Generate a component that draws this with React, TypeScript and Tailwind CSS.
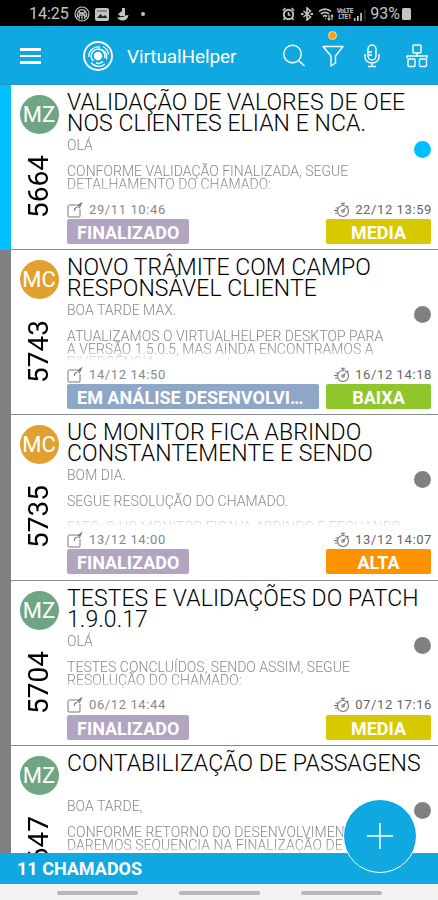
import clsx from "clsx";

type Ticket = {
  id: string;
  initials: string;
  avatar: string;
  title: string[];
  body: string[];
  opened: string;
  due: string;
  status: string;
  statusStyle: string;
  priority: string;
  priorityStyle: string;
  active?: boolean;
};

const tickets: Ticket[] = [
  {
    id: "5664",
    initials: "MZ",
    avatar: "bg-[#6fa582]",
    title: ["VALIDAÇÃO DE VALORES DE OEE", "NOS CLIENTES ELIAN E NCA."],
    body: ["OLÁ", "", "CONFORME VALIDAÇÃO FINALIZADA, SEGUE", "DETALHAMENTO DO CHAMADO:"],
    opened: "29/11 10:46",
    due: "22/12 13:59",
    status: "FINALIZADO",
    statusStyle: "w-[122px] bg-[#b3a4c1]",
    priority: "MEDIA",
    priorityStyle: "bg-[#d8c800]",
    active: true,
  },
  {
    id: "5743",
    initials: "MC",
    avatar: "bg-[#e0a131]",
    title: ["NOVO TRÂMITE COM CAMPO", "RESPONSÁVEL CLIENTE"],
    body: ["BOA TARDE MAX.", "", "ATUALIZAMOS O VIRTUALHELPER DESKTOP PARA", "A VERSÃO 1.5.0.5, MAS AINDA ENCONTRAMOS A", "DIVERGÊNCIA"],
    opened: "14/12 14:50",
    due: "16/12 14:18",
    status: "EM ANÁLISE DESENVOLVIMENTO",
    statusStyle: "w-[252px] bg-[#8ea7c6]",
    priority: "BAIXA",
    priorityStyle: "bg-[#8fc62b]",
  },
  {
    id: "5735",
    initials: "MC",
    avatar: "bg-[#e0a131]",
    title: ["UC MONITOR FICA ABRINDO", "CONSTANTEMENTE E SENDO"],
    body: ["BOM DIA.", "", "SEGUE RESOLUÇÃO DO CHAMADO.", "", "FATO: O UC MONITOR FICAVA ABRINDO E FECHANDO"],
    opened: "13/12 14:00",
    due: "13/12 14:07",
    status: "FINALIZADO",
    statusStyle: "w-[122px] bg-[#b3a4c1]",
    priority: "ALTA",
    priorityStyle: "bg-[#ff9200]",
  },
  {
    id: "5704",
    initials: "MZ",
    avatar: "bg-[#6fa582]",
    title: ["TESTES E VALIDAÇÕES DO PATCH", "1.9.0.17"],
    body: ["OLÁ", "", "TESTES CONCLUÍDOS, SENDO ASSIM, SEGUE", "RESOLUÇÃO DO CHAMADO:"],
    opened: "06/12 14:44",
    due: "07/12 17:16",
    status: "FINALIZADO",
    statusStyle: "w-[122px] bg-[#b3a4c1]",
    priority: "MEDIA",
    priorityStyle: "bg-[#d8c800]",
  },
  {
    id: "5647",
    initials: "MZ",
    avatar: "bg-[#6fa582]",
    title: ["CONTABILIZAÇÃO DE PASSAGENS"],
    body: ["BOA TARDE,", "", "CONFORME RETORNO DO DESENVOLVIMENTO", "DAREMOS SEQUENCIA NA FINALIZAÇÃO DE"],
    opened: "02/12 09:12",
    due: "06/12 10:30",
    status: "FINALIZADO",
    statusStyle: "w-[122px] bg-[#b3a4c1]",
    priority: "MEDIA",
    priorityStyle: "bg-[#d8c800]",
  },
];

function StatusBar() {
  return (
    <div className="flex h-[26px] shrink-0 items-center bg-black pt-[2px] pl-[29px] pr-[27px] text-[#c4c4c4]">
      <span className="w-[41px] text-[16px] leading-none whitespace-nowrap">14:25</span>
      <svg className="ml-[4px]" width="16" height="16" viewBox="0 0 16 16" fill="none" stroke="currentColor" strokeWidth="1.2">
        <circle cx="8" cy="8" r="7" />
        <path d="M3.5 11C2.5 7 5 3.7 8 3.7s5.5 3.3 4.5 7.3M5.5 13c-.8-3-.7-6.5 2.5-6.5s3.3 3.5 2.5 6.5M8 9v4.5M4 5l8 6M12 5l-8 6" />
      </svg>
      <svg className="ml-[5px]" width="14" height="13" viewBox="0 0 14 13">
        <rect width="14" height="13" rx="2" fill="currentColor" />
        <path d="M2 10l3.5-4 2.5 2.5L10 7l2.5 3z" fill="#222" />
        <path d="M2 3h10" stroke="#555" />
      </svg>
      <svg className="ml-[8px]" width="12" height="13" viewBox="0 0 12 13" fill="currentColor">
        <path d="M5 0h3v7.5l3.5-.5C11 10.5 9 12.5 6 12.5c-3.5 0-5.500-1.500-5.500-3L4 9 1 6l4-3z" />
        <path d="M3 8.5h4" stroke="#222" />
      </svg>
      <span className="ml-[12px] size-1 rounded-full bg-current" />

      <svg className="ml-auto" width="13" height="14" viewBox="0 0 13 14" fill="none" stroke="currentColor" strokeWidth="1.9">
        <circle cx="6.5" cy="7.5" r="4.7" />
        <path d="M.8 3.5L3.5 1M12.2 3.5L9.5 1M6.5 5v3h2M3 11l-1.5 2M10 11l1.5 2" strokeWidth="1.5" />
      </svg>
      <svg className="ml-[6px]" width="12" height="14" viewBox="0 0 12 14" fill="none" stroke="currentColor" strokeWidth="1.6">
        <path d="M2.5 4l7 6L6 13V1l3.5 3-7 6" />
        <path d="M0 7h2.5M9.5 7H12" strokeWidth="2" />
      </svg>
      <svg className="ml-[5px]" width="16" height="14" viewBox="0 0 16 14" fill="none" stroke="currentColor" strokeWidth="1.7">
        <path d="M1 4.5c3.5-3.3 8.5-3.3 12 0M3 7c2.5-2 5.5-2 8 0M5 9.5c1.3-1 2.7-1 4 0" />
        <path d="M7 11.5h1M11 8v5M9.800 11.500L11 13l1.200-1.500M14 13V8M12.900 9.500L14 8l1.200 1.500" strokeWidth="1.2" />
      </svg>
      <span className="ml-[2px] flex w-[17px] flex-col text-center text-[6.5px] leading-[6.5px] font-bold tracking-[-0.4px] whitespace-nowrap">
        <span>VoLTE</span>
        <span>LTE1</span>
      </span>
      <svg className="ml-[1px]" width="12" height="13" viewBox="0 0 12 13" fill="currentColor">
        <path d="M0 10h1.5v3H0zM3 8h1.7v5H3zM6.2 5h1.7v8H6.2z" />
        <path d="M10.5 1h1v12h-1z" fill="#444" />
      </svg>
      <span className="ml-[4px] text-[16px] leading-none">93%</span>
      <span className="ml-[2px] h-[12px] w-[9px] rounded-[1.5px] bg-current" />
    </div>
  );
}

function Header() {
  return (
    <header className="flex h-[59px] shrink-0 items-center border-b border-[#2b94bd] bg-[#10a8e0] pt-[2px] pr-[10px] pl-5 text-white">
      <div className="flex w-[21px] flex-col gap-[4px]">
        <span className="h-[2.5px] bg-white" />
        <span className="h-[2.5px] bg-white" />
        <span className="h-[2.5px] bg-white" />
      </div>
      <svg className="ml-[42px]" width="30" height="30" viewBox="0 0 30 30" fill="none" stroke="currentColor">
        <circle cx="15" cy="15" r="14" strokeWidth="1.9" />
        <circle cx="15" cy="15" r="4.2" fill="currentColor" stroke="none" />
        <path d="M10.5 20A6.8 6.8 0 1 1 21.5 17M13 22a7 7 0 0 0 7-1.5" strokeWidth="1.5" />
        <path d="M6 16A9.2 9.2 0 0 1 17 6M8 21.5a9.5 9.5 0 0 0 14 1.5M18.5 8.5a8 8 0 0 1 5 10M20 5.5c3 1.5 5 4.5 5.5 8" strokeWidth="1.3" />
      </svg>
      <span className="ml-[14px] text-[19px] leading-none tracking-[-0.1px] whitespace-nowrap">VirtualHelper</span>
      <div className="ml-auto flex items-center">
        <svg width="24" height="24" viewBox="0 0 24 24" fill="none" stroke="currentColor" strokeWidth="1.4">
          <circle cx="10.5" cy="10" r="8.7" />
          <path d="M16.5 16.5l6 5.5" />
        </svg>
        <div className="relative ml-[16px]">
          <svg width="22" height="22" viewBox="0 0 22 22" fill="none" stroke="currentColor" strokeWidth="1.4" strokeLinejoin="round">
            <path d="M1 1.5h20l-7.5 9.5v7l-4.5 3V11z" />
          </svg>
          <span className="absolute -top-[14px] left-[6px] size-[9px] rounded-full border border-[#f3dfae] bg-[#ff9e0b]" />
        </div>
        <svg className="ml-[20px]" width="16" height="24" viewBox="0 0 16 24" fill="none" stroke="currentColor" strokeWidth="1.4">
          <rect x="4" y="1" width="8" height="15" rx="4" />
          <path d="M1 10v3c0 3.5 3 6 7 6s7-2.5 7-6v-3M8 19v3.5M4 22.5h8M4.5 8H8M4.5 11H8" />
        </svg>
        <svg className="ml-[26px]" width="22" height="24" viewBox="0 0 22 24" fill="none" stroke="currentColor" strokeWidth="1.4">
          <rect x="7" y="1" width="8" height="8" rx="1" />
          <rect x="2" y="15" width="7" height="7.5" rx="1" />
          <rect x="13.5" y="15" width="7" height="7.5" rx="1" />
          <path d="M11 9v3M1 14.5V12h20v2.5" />
        </svg>
      </div>
    </header>
  );
}

function EditIcon() {
  return (
    <svg width="16" height="16" viewBox="0 0 16 16" fill="none" stroke="#777" strokeWidth="1">
      <path d="M9.5 3H2.5c-1 0-1.5.5-1.5 1.5V14c0 .7.3 1 1 1h10c.7 0 1-.3 1-1V7" />
      <path d="M7.5 9V7l5.5-4.5M14.5 1l-4 2.5 2 2z" strokeWidth="1.1" />
    </svg>
  );
}

function StopwatchIcon() {
  return (
    <svg width="17" height="16" viewBox="0 0 17 16" fill="none" stroke="#707070" strokeWidth="1.1">
      <circle cx="10" cy="9" r="5.5" />
      <circle cx="10" cy="9" r="1.2" />
      <path d="M8 1.3h4M10 1.5v2M10.5 8.5L12.5 6M14 4l1.5 1M1 8.5h3M2 11h2.5M2.5 6H5" />
    </svg>
  );
}

function TicketRow({ ticket }: { ticket: Ticket }) {
  return (
    <li className="flex h-[165.2px] shrink-0">
      <div className={clsx("w-[11px] shrink-0", ticket.active ? "bg-[#00bfff]" : "bg-[#808080]")} />
      <div className="flex min-w-0 flex-1 border-b border-[#8a8a8a]">
        <div className="flex w-[56px] shrink-0 flex-col items-center pt-[10px]">
          <div className={clsx("flex size-[39px] items-center justify-center rounded-full text-[22px] text-white", ticket.avatar)}>
            {ticket.initials}
          </div>
          <div className="mt-[20px] flex h-[66px] w-[34px] rotate-180 items-center justify-center text-[28px] leading-[34px] text-black [writing-mode:vertical-rl]">
            {ticket.id}
          </div>
        </div>

        <div className="flex min-w-0 flex-1 flex-col pr-[7px]">
          <h2 className="h-[50px] pt-[7px] text-[23px] leading-[21px] font-light tracking-[0.07px] whitespace-nowrap text-black">
            {ticket.title.map((line) => (
              <span key={line} className="block">{line}</span>
            ))}
          </h2>
          <div className="flex h-[65.5px] justify-between">
            <p className="h-[62px] overflow-hidden pt-[4px] text-[14px] leading-[13px] font-light tracking-[0.03px] whitespace-nowrap text-[#888] [mask-image:linear-gradient(#000_78%,transparent)]">
              {ticket.body.map((line, i) => (
                <span key={i} className="block h-[13px]">{line}</span>
              ))}
            </p>
            <span className={clsx("mt-[6px] size-[17px] shrink-0 rounded-full", ticket.active ? "bg-[#00bfff]" : "bg-[#808080]")} />
          </div>
          <div className="flex h-[18px] items-center justify-between text-[13px] tracking-[0.6px] text-[#666]">
            <span className="flex items-center gap-[6px] text-[#888]">
              <EditIcon />
              {ticket.opened}
            </span>
            <span className="-mr-[1px] flex items-center gap-[5px]">
              <StopwatchIcon />
              {ticket.due}
            </span>
          </div>
          <div className="mt-[0.5px] flex h-[25px] justify-between text-[18px] leading-[27px] font-bold text-white">
            <span className={clsx("truncate rounded-[2px] pr-[8px] pl-[10px]", ticket.statusStyle)}>{ticket.status}</span>
            <span className={clsx("w-[105px] rounded-[2px] text-center", ticket.priorityStyle)}>{ticket.priority}</span>
          </div>
        </div>
      </div>
    </li>
  );
}

export default function App() {
  return (
    <div className="flex h-[900px] w-[438px] flex-col overflow-hidden bg-white font-['Roboto','Liberation_Sans',sans-serif]">
      <StatusBar />
      <Header />
      <ul className="flex min-h-0 flex-1 flex-col overflow-hidden">
        {tickets.map((ticket) => (
          <TicketRow key={ticket.id} ticket={ticket} />
        ))}
      </ul>
      <footer className="relative flex h-[31px] shrink-0 items-center bg-[#10a8e0] pl-[17px] text-[18px] font-bold text-white">
        11 CHAMADOS
        <button className="absolute -top-[54px] left-[342.5px] flex size-[74px] items-center justify-center rounded-full border-[1.5px] border-white bg-[#10a8e0]">
          <svg width="28" height="28" viewBox="0 0 28 28" stroke="currentColor" strokeWidth="1.5">
            <path d="M14 1v26M1 14h26" />
          </svg>
        </button>
      </footer>
      <nav className="flex h-[16px] shrink-0 items-start gap-[41px] bg-[#f2f2f2] pt-[7px] pl-[57px]">
        <span className="h-[4px] w-[81px] rounded-full bg-[#b7b7b7]" />
        <span className="h-[4px] w-[81px] rounded-full bg-[#b7b7b7]" />
        <span className="h-[4px] w-[81px] rounded-full bg-[#b7b7b7]" />
      </nav>
    </div>
  );
}
